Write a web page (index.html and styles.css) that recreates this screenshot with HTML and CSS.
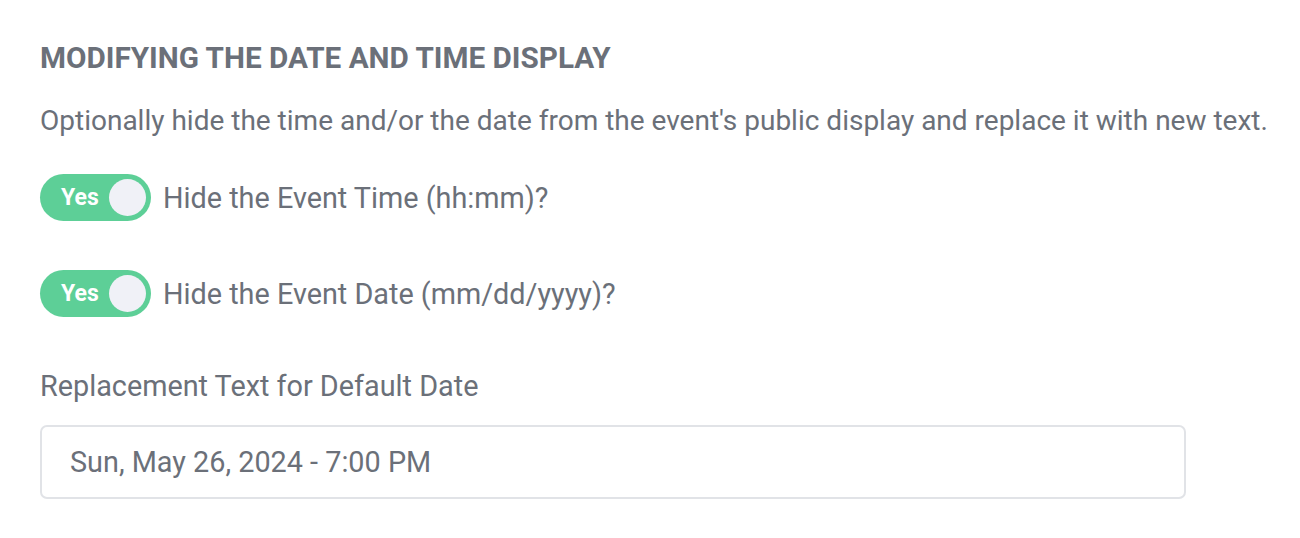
FILE: index.html
```html
<!DOCTYPE html>
<html>
<head>
<meta charset="utf-8">
<link rel="stylesheet" href="styles.css">
</head>
<body>
<div class="section">
  <h2 class="title">MODIFYING THE DATE AND TIME DISPLAY</h2>
  <p class="desc">Optionally hide the time and/or the date from the event's public display and replace it with new text.</p>
  <div class="toggle-row">
    <span class="toggle"><span class="toggle-text">Yes</span><span class="knob"></span></span>
    <span class="toggle-label">Hide the Event Time (hh:mm)?</span>
  </div>
  <div class="toggle-row">
    <span class="toggle"><span class="toggle-text">Yes</span><span class="knob"></span></span>
    <span class="toggle-label">Hide the Event Date (mm/dd/yyyy)?</span>
  </div>
  <label class="field-label">Replacement Text for Default Date</label>
  <div class="input">Sun, May 26, 2024 - 7:00 PM</div>
</div>
</body>
</html>
```

FILE: styles.css
```css
html, body {
  margin: 0;
  padding: 0;
  background: #ffffff;
}
body {
  font-family: Roboto, "Liberation Sans", sans-serif;
  color: #6b7079;
}
.section {
  padding: 40px 40px 0 40px;
  width: 1146px;
  display: flex;
  flex-direction: column;
}
.title {
  margin: 0;
  font-size: 29.7px;
  line-height: 36px;
  font-weight: 700;
  color: #6b7079;
}
.desc {
  margin: 28px 0 0 0;
  font-size: 28px;
  line-height: 34px;
  white-space: nowrap;
}
.toggle-row {
  display: flex;
  align-items: center;
  gap: 12px;
  margin-top: 36px;
  height: 47px;
}
.toggle-row + .toggle-row {
  margin-top: 49px;
}
.toggle {
  display: flex;
  align-items: center;
  justify-content: space-between;
  flex: none;
  width: 111px;
  height: 47px;
  border-radius: 24px;
  background: #5dcf97;
  box-sizing: border-box;
  padding: 0 5px 0 21px;
}
.toggle-text {
  color: #ffffff;
  font-weight: 700;
  font-size: 23px;
}
.knob {
  width: 37px;
  height: 37px;
  border-radius: 50%;
  background: #f0f1f7;
}
.toggle-label {
  font-size: 28.8px;
}
.field-label {
  margin-top: 52px;
  font-size: 28.8px;
  line-height: 34px;
}
.input {
  margin-top: 22px;
  height: 74px;
  box-sizing: border-box;
  border: 2px solid #e1e3e7;
  border-radius: 7px;
  padding: 0 28px;
  display: flex;
  align-items: center;
  font-size: 28.8px;
  color: #6b7079;
}
```
